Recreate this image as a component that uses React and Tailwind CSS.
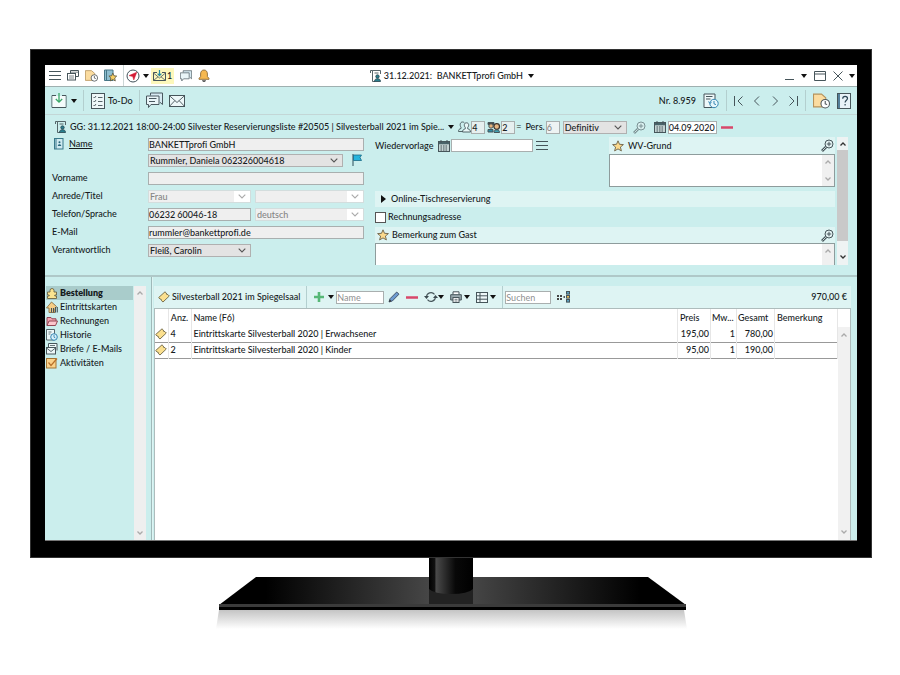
import { useState } from "react";

function Svg({ w, h, children, className = "" }) {
  return (
    <svg
      width={w}
      height={h}
      viewBox={`0 0 ${w} ${h}`}
      fill="none"
      stroke="#46555a"
      className={`shrink-0 ${className}`}
      aria-hidden="true"
    >
      {children}
    </svg>
  );
}

function IconButton({ label, children, className = "" }) {
  return (
    <button type="button" aria-label={label} className={`flex shrink-0 items-center ${className}`}>
      {children}
    </button>
  );
}

const Caret = () => (
  <Svg w={6} h={4}>
    <path d="M0 0h6L3 4z" fill="#111" stroke="none" />
  </Svg>
);

const Chevron = ({ color = "#555" }) => (
  <Svg w={8} h={5}>
    <path d="M.7.7L4 4 7.3.7" stroke={color} strokeWidth="1.1" />
  </Svg>
);

const ScrollArrow = ({ up, color = "#aaa" }) => (
  <Svg w={6} h={4} className={up ? "" : "rotate-180"}>
    <path d="M.5 3.500L3 1l2.500 2.500" stroke={color} strokeWidth="1.3" />
  </Svg>
);

const Separator = () => <span className="w-px self-stretch bg-[#b3cfcf]" />;

const Menu = () => (
  <Svg w={12} h={11}>
    <path d="M0 1.500h12M0 5.500h12M0 9.500h12" />
  </Svg>
);

const Windows = () => (
  <Svg w={12} h={11}>
    <path d="M3.500 3V.5h8v6H9" />
    <rect x=".5" y="3.500" width="8" height="6.500" />
    <path d="M2 6h5M2 8h5M4 2.200h7" strokeWidth=".7" />
  </Svg>
);

const NoteClock = ({ size = 13 }) => (
  <svg width={size} height={size} viewBox="0 0 16 15" fill="none" className="shrink-0" aria-hidden="true">
    <path d="M.5 1.500h7.500l4 3.500v8.500H.5z" fill="#fbdca0" stroke="#b6925a" />
    <circle cx="11.500" cy="10.500" r="4" fill="#fff" stroke="#4c5458" />
    <path d="M11.500 8v2.700l1.800.6" stroke="#4c5458" />
  </svg>
);

const BookStar = () => (
  <Svg w={13} h={13}>
    <path d="M.5 1h8.500v10.500H.5z" fill="#8fbfd0" stroke="#477787" />
    <path d="M2.500 1v10.500" stroke="#477787" />
    <path d="M8.800 4.200l1.200 2.600 2.700.3-2 1.900.6 2.900-2.500-1.400-2.500 1.400.6-2.900-2-1.900 2.700-.3z" fill="#f7ce63" stroke="#54513c" strokeWidth=".8" />
  </Svg>
);

const Compass = () => (
  <Svg w={14} h={14}>
    <circle cx="7" cy="7" r="6" stroke="#41525a" fill="#fff" />
    <path d="M10.800 3.200L7.800 11 6.700 7.600 3 6.600z" fill="#d51c36" stroke="#d51c36" strokeWidth=".5" />
  </Svg>
);

const MailIn = () => (
  <Svg w={13} h={11}>
    <path d="M4 2.500H.5v8h12v-8H9" />
    <path d="M.5 3l6 5 6-5M.5 10.500L5 6.800M12.500 10.500L8 6.800" strokeWidth=".8" />
    <path d="M6.500 0v5.500M4.600 3.700l1.900 1.900 1.900-1.900" stroke="#248ba4" strokeWidth="1.200" />
  </Svg>
);

const Chat = ({ size = 12, lines }) => (
  <svg width={size} height={size} viewBox="0 0 17 16" fill="none" stroke="#4a5960" className="shrink-0" aria-hidden="true">
    <path d="M4.500 3V.5h12V12l-2.500-2.200" fill="#d7eaf2" />
    <path d="M.5 3.500H13v8.500H5l-2.500 3V12h-2z" fill="#e9f5f8" />
    {lines && <path d="M3 6h7.500M3 9h6" />}
  </svg>
);

const Bell = () => (
  <Svg w={12} h={13}>
    <path d="M6 1C3.700 1 2.600 2.800 2.600 5v2.500L1 9.500v.8h10v-.8L9.400 7.500V5C9.400 2.800 8.300 1 6 1z" fill="#f6b84f" stroke="#8a6936" strokeWidth=".9" />
    <path d="M4.500 11.200a1.500 1.500 0 003 0" fill="#555" stroke="#555" strokeWidth=".8" />
  </Svg>
);

const GuestFile = () => (
  <Svg w={11} h={12}>
    <path d="M5 11.500H2.500V.5h8v3.500M.5 3V.5h2M4.500 3h4" strokeWidth=".9" />
    <circle cx="7.500" cy="6.500" r="1.700" fill="#2a7f8f" stroke="#24424b" strokeWidth=".8" />
    <path d="M4.500 11.500c0-2 1.200-2.800 3-2.800s3 .8 3 2.800z" fill="#2a7f8f" stroke="#24424b" strokeWidth=".8" />
  </Svg>
);

const SaveIn = () => (
  <Svg w={16} h={15}>
    <path d="M5 2.500H1v12h14v-12h-4" fill="none" />
    <path d="M1.500 3h13v11h-13z" fill="#f4fbfb" stroke="none" />
    <path d="M8 0v9M4.800 6l3.200 3.200L11.200 6" stroke="#3aa868" strokeWidth="1.300" />
  </Svg>
);

const Checklist = () => (
  <Svg w={14} h={16}>
    <rect x=".5" y=".5" width="13" height="15" fill="#eef8f9" />
    <path d="M2.500 4l1 1 1.500-2M2.500 8l1 1L5 7M2.500 12l1 1L5 11M7 4.500h4.500M7 8.500h4.500M7 12.500h4.500" strokeWidth=".9" />
  </Svg>
);

const Mail = () => (
  <Svg w={16} h={12}>
    <rect x=".5" y=".5" width="15" height="11" fill="#eef8f9" />
    <path d="M.5.7L8 7.500 15.500.7M.5 11.300l5.300-5.600M15.500 11.300l-5.300-5.600" strokeWidth=".9" />
  </Svg>
);

const History = () => (
  <Svg w={16} h={16}>
    <path d="M1 14.500V1h11v13.500z" fill="#eef8f9" />
    <path d="M3 3.500h6.500M3 6h4.500" />
    <circle cx="11" cy="10.500" r="4.200" fill="#e5f6fb" stroke="#3787b3" />
    <path d="M11 8v2.800l2 .8M5.500 8.500l1.400 2 1.800-1.500" stroke="#3787b3" />
  </Svg>
);

const Help = () => (
  <Svg w={14} h={16}>
    <rect x=".5" y=".5" width="13" height="15" fill="#e8f3f8" />
    <path d="M2 1v14" stroke="#54809a" strokeWidth="2" />
    <path d="M5.700 5.800c0-3.300 4.800-3 4.800-.3 0 1.800-2.400 1.700-2.400 4M8.100 11v1.500" stroke="#2d4655" strokeWidth="1.200" />
  </Svg>
);

const People = () => (
  <Svg w={13} h={12}>
    <path d="M6.500 10.500h-6c0-2 .8-2.500 2.500-3V6.200C1.500 4.500 2 1 4.500 1c1 0 1.700.4 2 1" strokeWidth=".9" />
    <path d="M4.500 11c0-2 1-2.600 2.800-3.200V6.500C5.700 4.700 6 1.800 8.500 1.800s2.800 2.900 1.200 4.700v1.300c1.800.6 2.800 1.200 2.800 3.200z" fill="#e8f7f7" strokeWidth=".9" />
  </Svg>
);

const Kids = () => (
  <Svg w={14} h={12}>
    <path d="M1 1.500h6v2H1z" fill="#444" />
    <circle cx="4" cy="5" r="2.200" fill="#e3b27c" />
    <path d="M1 11V8.500h5V11z" fill="#2f8ba2" />
    <circle cx="9.700" cy="5.500" r="2.800" fill="#e5b784" stroke="#3c3029" strokeWidth="1.200" />
    <path d="M7 11.500c0-2 1-2.700 2.700-2.700s2.800.7 2.800 2.700z" fill="#3f9fb0" />
  </Svg>
);

const Calendar = () => (
  <Svg w={12} h={12}>
    <rect x=".5" y="1.500" width="11" height="10" fill="#c3d2d2" />
    <path d="M1 3h10" strokeWidth="2.500" stroke="#49646a" />
    <path d="M3 0v3M9 0v3" />
    <path d="M2.500 6h7M2.500 8h7M2.500 10h7" strokeDasharray="1.500 1" strokeWidth="1.200" />
  </Svg>
);

const Magnifier = () => (
  <Svg w={13} h={13}>
    <circle cx="8" cy="5" r="4" fill="#e3f2f2" />
    <path d="M8 2.800v4.400M5.800 5h4.400" />
    <path d="M5 8l-4 4" strokeWidth="2.600" />
    <path d="M4.800 8.200L1.500 11.500" stroke="#dce9e9" strokeWidth=".9" />
  </Svg>
);

const Minus = () => (
  <Svg w={12} h={3}>
    <path d="M0 1.500h12" stroke="#d8476a" strokeWidth="2.500" />
  </Svg>
);

const Star = () => (
  <Svg w={12} h={12}>
    <path d="M6 .8l1.500 3.500 3.900.3-3 2.500 1 3.800L6 8.900l-3.400 2 1-3.800-3-2.500 3.900-.3z" fill="#fbd98c" stroke="#6b6148" strokeWidth=".9" />
  </Svg>
);

const AddressBook = () => (
  <Svg w={10} h={12}>
    <rect x=".5" y=".5" width="8.500" height="10.500" fill="#cfeaf0" stroke="#39798a" />
    <path d="M2 .5V11" stroke="#39798a" />
    <circle cx="5.500" cy="4.300" r="1" fill="#28677a" stroke="none" />
    <path d="M3.800 8c0-2.500 3.400-2.500 3.400 0z" fill="#28677a" stroke="none" />
  </Svg>
);

const Flag = () => (
  <Svg w={10} h={12}>
    <path d="M1 0v12" stroke="#2b4c58" />
    <path d="M1.500 1H9.500L8 3.500 9.500 6.500h-8z" fill="#25b5dd" stroke="#1a6a86" strokeWidth=".8" />
  </Svg>
);

const Ticket = () => (
  <Svg w={12} h={12}>
    <path d="M.7 6.500L7 .8 8.300 2Q8 3.800 9.900 3.600L11.300 5 5 11 3.600 9.800Q3.800 8 2 8z" fill="#fbe08f" stroke="#6c6443" strokeWidth=".9" />
  </Svg>
);

const Order = () => (
  <Svg w={12} h={12}>
    <path d="M4 3.500a2 2 0 114 0V5h2.500v3H8.800v1h1.700v2.500h-9V9h1.700V8H1.500V5H4z" fill="#fbe38f" stroke="#6c6443" strokeWidth=".9" />
  </Svg>
);

const Cards = () => (
  <Svg w={12} h={12}>
    <path d="M.5 7L5.500 1l5 4.500L9 8v3.500H3V7z" fill="#f6ce86" stroke="#8a7144" strokeWidth=".9" />
    <path d="M5.500 7v4.500M7.500 7v4.500M9.500 6v5.500M11.300 6v5.500" strokeWidth="1.100" />
  </Svg>
);

const Folder = () => (
  <Svg w={12} h={12}>
    <path d="M1 10.500v-8h4l1 1.300h4V6" fill="#f3a3ae" stroke="#924654" />
    <path d="M1 10.500L3 6h8.500l-2 4.500z" fill="#fcc5cc" stroke="#924654" />
  </Svg>
);

const HistorySmall = () => (
  <Svg w={12} h={12}>
    <path d="M.5 11V.5h8V11z" fill="#eef8f9" strokeWidth=".9" />
    <path d="M2.500 3h3M2.500 5h2" strokeWidth=".8" />
    <circle cx="8" cy="8" r="3.300" fill="#d8f0fa" stroke="#3787b3" />
    <path d="M8 6v2.200l1.300.7" stroke="#3787b3" strokeWidth=".9" />
  </Svg>
);

const Letters = () => (
  <Svg w={12} h={12}>
    <path d="M2.500 4.500v-4h8.500v7" fill="#eef8f9" />
    <path d="M4 2.500h5" strokeWidth=".8" />
    <rect x=".5" y="4.500" width="9" height="6.500" fill="#eef8f9" />
    <path d="M.5 5L5 8.500 9.500 5" strokeWidth=".9" />
  </Svg>
);

const Task = () => (
  <Svg w={12} h={12}>
    <rect x=".5" y="1.500" width="9.500" height="9.500" fill="#fbd28a" stroke="#a37434" />
    <path d="M2.500 5.500L5 8.500l6-7" stroke="#b8702a" strokeWidth="1.200" />
  </Svg>
);

const Plus = () => (
  <Svg w={12} h={12}>
    <path d="M6 1v10M1 6h10" stroke="#57b877" strokeWidth="2.600" />
  </Svg>
);

const Pencil = () => (
  <Svg w={12} h={12}>
    <path d="M1 11l1-3.300L8.700 1l2.300 2.200L4.300 10z" fill="#6d9bd0" stroke="#3b4b60" strokeWidth=".9" />
    <path d="M1 11l.8-2.500 1.700 1.600z" fill="#333" stroke="none" />
  </Svg>
);

const Refresh = () => (
  <Svg w={14} h={12}>
    <path d="M2.500 6a4.500 4.500 0 018-2.700M11.500 6a4.500 4.500 0 01-8 2.700" strokeWidth="1.100" />
    <path d="M0 5h5L2.500 8zM9 7h5l-2.500-3z" fill="#3d4b50" stroke="none" />
  </Svg>
);

const Printer = () => (
  <Svg w={12} h={12}>
    <path d="M3 3.500V.8h6v2.700" fill="#fff" />
    <path d="M3 9H.7V3.700h10.600V9H9" fill="#9aaaaf" />
    <rect x="3" y="6.500" width="6" height="5" fill="#fff" />
    <path d="M4.500 8.300h3M4.500 10h3" strokeWidth=".8" />
  </Svg>
);

const Grid = () => (
  <Svg w={12} h={11}>
    <rect x=".5" y=".5" width="11" height="10" fill="#eef8f9" />
    <path d="M4 .5v10M.5 3.800h11M.5 7.200h11" />
  </Svg>
);

const Structure = () => (
  <Svg w={14} h={12}>
    <path d="M0 4h2v2H0zM3 4h2v2H3zM0 7h2v2H0zM3 7h2v2H3z" fill="#444" stroke="none" />
    <path d="M6.500 6h1.500" stroke="#222" strokeWidth="1.500" />
    <rect x="9.500" y=".5" width="3" height="2.600" fill="#5aa0c0" />
    <rect x="9.500" y="4.500" width="3" height="2.600" fill="#e9ba53" />
    <rect x="9.500" y="8.500" width="3" height="2.600" fill="#5aa0c0" />
  </Svg>
);

function Dropdown({ label, value, disabled, className = "" }) {
  return (
    <div className={`relative h-[13px] ${className}`}>
      <select
        aria-label={label}
        disabled={disabled}
        className={
          disabled
            ? "block h-full w-full appearance-none border border-[#d3dddd] bg-[#efefef] pl-px leading-[11px] text-[#858585] opacity-100"
            : "block h-full w-full appearance-none border border-[#b0b0b0] bg-[#e3e3e3] pl-px leading-[11px]"
        }
      >
        <option>{value}</option>
      </select>
      <span
        className={`pointer-events-none absolute inset-y-px right-px flex w-4 items-center justify-center ${disabled ? "bg-white" : ""}`}
      >
        <Chevron color={disabled ? "#aaa" : "#555"} />
      </span>
    </div>
  );
}

function TextField({ className = "", ...props }) {
  return (
    <input
      type="text"
      className={`h-[13px] min-w-0 border border-[#a9afaf] leading-[11px] ${className}`}
      {...props}
    />
  );
}

function TitleBar() {
  return (
    <header className="flex h-[22px] shrink-0 items-center border-b border-[#9fb0b0] bg-white pl-1 pr-[2px]">
      <div className="flex h-full flex-1 items-center gap-[6px]">
        <IconButton label="Menü"><Menu /></IconButton>
        <IconButton label="Fenster"><Windows /></IconButton>
        <IconButton label="Notiz"><NoteClock /></IconButton>
        <IconButton label="Favoriten"><BookStar /></IconButton>
        <div className="flex h-full items-center gap-[2px]">
          <span className="h-full w-px bg-[#ccd6d6]" />
          <IconButton label="Kompass" className="gap-[3px]"><Compass /><Caret /></IconButton>
          <IconButton label="Posteingang" className="h-4 gap-px bg-[#fdf8bb] px-[2px]"><MailIn />1</IconButton>
        </div>
        <IconButton label="Chat"><Chat /></IconButton>
        <IconButton label="Benachrichtigungen"><Bell /></IconButton>
      </div>
      <button type="button" className="flex items-center gap-[3px] whitespace-pre">
        <GuestFile />31.12.2021:  BANKETTprofi GmbH <Caret />
      </button>
      <div className="flex flex-1 items-center justify-end gap-[7px]">
        <IconButton label="Minimieren" className="gap-[7px]">
          <Svg w={9} h={11}><path d="M0 9.500h9" /></Svg>
          <Caret />
        </IconButton>
        <IconButton label="Maximieren">
          <Svg w={12} h={10}><path d="M.5.5h11v9H.5zM.5 3h11" /></Svg>
        </IconButton>
        <IconButton label="Schließen" className="gap-[6px]">
          <Svg w={10} h={10}><path d="M.5.5l9 9M9.500.5l-9 9" /></Svg>
          <Caret />
        </IconButton>
      </div>
    </header>
  );
}

function Toolbar() {
  return (
    <div className="flex h-7 shrink-0 items-center justify-between border-b border-[#c3d6d6] px-[6px] py-[3px]">
      <div className="flex h-full items-center gap-[6px]">
        <IconButton label="Speichern" className="gap-1"><SaveIn /><Caret /></IconButton>
        <Separator />
        <button type="button" className="flex items-center gap-[3px] pl-px"><Checklist />To-Do</button>
        <Separator />
        <IconButton label="Nachrichten"><Chat size={17} lines /></IconButton>
        <IconButton label="E-Mail"><Mail /></IconButton>
      </div>
      <div className="flex h-full items-center gap-[7px]">
        <span>Nr. 8.959</span>
        <IconButton label="Verlauf"><History /></IconButton>
        <Separator />
        <div className="flex items-center gap-[10px]">
          <IconButton label="Erster"><Svg w={9} h={10}><path d="M.5 0v10M8.500.5L4 5l4.500 4.500" /></Svg></IconButton>
          <IconButton label="Zurück"><Svg w={7} h={10}><path d="M6 .5L1.500 5 6 9.500" /></Svg></IconButton>
          <IconButton label="Weiter"><Svg w={9} h={10}><path d="M3 .5L7.500 5 3 9.500" /></Svg></IconButton>
          <IconButton label="Letzter"><Svg w={9} h={10}><path d="M8.500 0v10M.5.5L5 5 .5 9.500" /></Svg></IconButton>
        </div>
        <Separator />
        <IconButton label="Termin"><NoteClock size={17} /></IconButton>
        <IconButton label="Hilfe"><Help /></IconButton>
      </div>
    </div>
  );
}

function EventBar() {
  return (
    <div className="flex h-[22px] shrink-0 items-center pl-[10px] pt-[2px]">
      <button type="button" className="flex items-center gap-1 whitespace-nowrap">
        <GuestFile />
        GG: 31.12.2021 18:00-24:00 Silvester Reservierungsliste #20505 | Silvesterball 2021 im Spie...
        <Caret />
      </button>
      <div className="ml-1 flex items-center">
        <People />
        <TextField aria-label="Erwachsene" defaultValue="4" className="w-[14px] bg-[#e6efef]" />
        <span className="w-[2px]" />
        <Kids />
        <TextField aria-label="Kinder" defaultValue="2" className="w-[14px] bg-[#e6efef]" />
      </div>
      <span className="ml-px">=</span>
      <label htmlFor="persons" className="ml-1">Pers.</label>
      <TextField id="persons" defaultValue="6" className="ml-px w-[14px] bg-[#eef3f3] text-[#888]" />
      <Dropdown label="Status" value="Definitiv" className="ml-[3px] w-16" />
      <IconButton label="Suchen" className="ml-[6px] opacity-60"><Magnifier /></IconButton>
      <IconButton label="Kalender" className="ml-2"><Calendar /></IconButton>
      <TextField aria-label="Datum" defaultValue="04.09.2020" className="ml-[2px] w-[49px] bg-white" />
      <IconButton label="Datum entfernen" className="ml-1"><Minus /></IconButton>
    </div>
  );
}

function GuestForm() {
  return (
    <form className="grid w-[312px] shrink-0 auto-rows-[18px] grid-cols-[96px_216px] items-center">
      <div className="-mt-1 flex items-center gap-[5px] pl-[2px]">
        <AddressBook />
        <label htmlFor="name" className="underline">Name</label>
      </div>
      <TextField id="name" defaultValue="BANKETTprofi GmbH" className="-mt-1 bg-[#efefef]" />
      <span />
      <div className="-mt-2 flex items-center justify-between">
        <Dropdown label="Kontakt" value="Rummler, Daniela 062326004618" className="w-[195px]" />
        <IconButton label="Markieren" className="pr-[2px]"><Flag /></IconButton>
      </div>
      <label htmlFor="vorname" className="-mt-2">Vorname</label>
      <TextField id="vorname" className="-mt-2 bg-[#efefef]" />
      <span className="-mt-2">Anrede/Titel</span>
      <div className="-mt-2 flex gap-1">
        <Dropdown label="Anrede" value="Frau" disabled className="w-[103px]" />
        <Dropdown label="Titel" value="" disabled className="flex-1" />
      </div>
      <label htmlFor="telefon" className="-mt-2">Telefon/Sprache</label>
      <div className="-mt-2 flex gap-1">
        <TextField id="telefon" defaultValue="06232 60046-18" className="w-[103px] bg-[#efefef]" />
        <Dropdown label="Sprache" value="deutsch" disabled className="flex-1" />
      </div>
      <label htmlFor="email" className="-mt-2">E-Mail</label>
      <TextField id="email" defaultValue="rummler@bankettprofi.de" className="-mt-2 bg-[#efefef]" />
      <span className="-mt-2">Verantwortlich</span>
      <Dropdown label="Verantwortlich" value="Fleiß, Carolin" className="-mt-2 w-[103px]" />
    </form>
  );
}

function NoteArea({ label, className = "", last }) {
  return (
    <div className={`flex border border-[#8e9c9c] bg-white ${className}`}>
      <textarea aria-label={label} className="block min-w-0 flex-1 resize-none" />
      <div className="flex w-3 flex-col items-center justify-between bg-[#f0f0f0] py-[5px]">
        <ScrollArrow up />
        {!last && <ScrollArrow />}
      </div>
    </div>
  );
}

function Details() {
  return (
    <div className="flex min-w-0 flex-1">
      <div className="min-w-0 flex-1">
        <div className="flex h-[54px] items-start justify-between">
          <div className="flex items-center pt-[2px]">
            <label htmlFor="wiedervorlage" className="w-[63px]">Wiedervorlage</label>
            <Calendar />
            <TextField id="wiedervorlage" className="ml-px w-[82px] bg-white" />
            <IconButton label="Liste" className="ml-[3px]"><Menu /></IconButton>
          </div>
          <div className="w-[226px]">
            <div className="flex h-[17px] items-center gap-1 bg-[#def4f3] pl-[3px] pr-px">
              <Star />
              <span className="flex-1">WV-Grund</span>
              <IconButton label="WV-Grund vergrößern"><Magnifier /></IconButton>
            </div>
            <NoteArea label="WV-Grund" className="h-[33px]" />
          </div>
        </div>
        <button type="button" className="flex h-4 w-full items-center gap-[5px] bg-[#def4f3] pl-[6px]">
          <Svg w={5} h={8}><path d="M0 0l5 4-5 4z" fill="#111" stroke="none" /></Svg>
          Online-Tischreservierung
        </button>
        <label className="flex h-5 items-center gap-[2px]">
          <input type="checkbox" className="h-[11px] w-[11px] appearance-none border border-[#555] bg-white checked:bg-[#3d4b50]" />
          Rechnungsadresse
        </label>
        <div className="flex h-4 items-center gap-[3px] bg-[#def4f3] pl-[2px] pr-px">
          <Star />
          <span className="flex-1">Bemerkung zum Gast</span>
          <IconButton label="Bemerkung vergrößern"><Magnifier /></IconButton>
        </div>
        <NoteArea label="Bemerkung zum Gast" className="h-[22px] border-b-0" last />
      </div>
      <div className="ml-[2px] mr-[9px] flex w-[11px] flex-col items-center bg-[#eef3f3]">
        <span className="flex h-[13px] items-center"><ScrollArrow up color="#333" /></span>
        <span className="w-full flex-1 bg-[#c9c9c9]" />
        <span className="flex h-6 items-center pt-2"><ScrollArrow color="#333" /></span>
      </div>
    </div>
  );
}

const sections = [
  { name: "Bestellung", Icon: Order },
  { name: "Eintrittskarten", Icon: Cards },
  { name: "Rechnungen", Icon: Folder },
  { name: "Historie", Icon: HistorySmall },
  { name: "Briefe / E-Mails", Icon: Letters },
  { name: "Aktivitäten", Icon: Task },
];

function Sidebar() {
  const [active, setActive] = useState("Bestellung");

  return (
    <div className="flex w-[102px] shrink-0">
      <nav className="w-[88px] pl-px">
        {sections.map(({ name, Icon }) => (
          <button
            key={name}
            type="button"
            onClick={() => setActive(name)}
            className={`flex h-[14px] w-full items-center gap-[2px] whitespace-nowrap ${active === name ? "bg-[#a9cccb] font-extrabold" : ""}`}
          >
            <Icon />
            {name}
          </button>
        ))}
      </nav>
      <div className="ml-px flex w-3 flex-col items-center justify-between bg-[#efefef] py-[5px]">
        <ScrollArrow up />
        <ScrollArrow />
      </div>
    </div>
  );
}

const positions = [
  { count: "4", name: "Eintrittskarte Silvesterball 2020 | Erwachsener", price: "195,00", vat: "1", total: "780,00" },
  { count: "2", name: "Eintrittskarte Silvesterball 2020 | Kinder", price: "95,00", vat: "1", total: "190,00" },
];

function OrderTable() {
  return (
    <div className="flex flex-1 border border-b-0 border-[#aebcbc] bg-white">
      <div className="min-w-0 flex-1">
        <table className="w-full table-fixed border-collapse text-left">
          <colgroup>
            <col className="w-[13px]" />
            <col className="w-[23px]" />
            <col />
            <col className="w-[33px]" />
            <col className="w-[26px]" />
            <col className="w-[38px]" />
            <col className="w-[63px]" />
          </colgroup>
          <thead>
            <tr className="h-[17px] whitespace-nowrap *:border-r *:border-[#e6e6e6] *:p-0 *:font-medium">
              <th aria-label="Typ" />
              <th className="text-center">Anz.</th>
              <th><span className="pl-[2px]">Name (F6)</span></th>
              <th><span className="pl-[2px]">Preis</span></th>
              <th><span className="pl-px">Mw...</span></th>
              <th><span className="pl-px">Gesamt</span></th>
              <th><span className="pl-[2px]">Bemerkung</span></th>
            </tr>
          </thead>
          <tbody>
            {positions.map((p) => (
              <tr key={p.name} className="h-4 border-b border-[#999] *:border-r *:border-r-[#e6e6e6] *:p-0">
                <td><Ticket /></td>
                <td><span className="pl-[2px]">{p.count}</span></td>
                <td><span className="pl-[2px]">{p.name}</span></td>
                <td className="text-right"><span className="pr-px">{p.price}</span></td>
                <td className="text-right"><span className="pr-px">{p.vat}</span></td>
                <td className="text-right"><span className="pr-px">{p.total}</span></td>
                <td />
              </tr>
            ))}
          </tbody>
        </table>
      </div>
      <div className="mt-[18px] flex w-3 flex-col items-center justify-between bg-[#f1f1f1] py-[6px]">
        <ScrollArrow up />
        <ScrollArrow />
      </div>
    </div>
  );
}

function OrderPanel() {
  return (
    <div className="mr-[6px] flex min-w-0 flex-1 flex-col">
      <div className="flex h-[22px] shrink-0 items-center gap-[6px] bg-[#def4f3] px-1">
        <div className="flex items-center gap-[2px] whitespace-nowrap"><Ticket />Silvesterball 2021 im Spiegelsaal</div>
        <Separator />
        <div className="flex items-center gap-[2px]">
          <IconButton label="Hinzufügen" className="gap-[3px]"><Plus /><Caret /></IconButton>
          <TextField aria-label="Name" placeholder="Name" className="w-12 bg-white" />
          <IconButton label="Bearbeiten" className="ml-[2px]"><Pencil /></IconButton>
        </div>
        <IconButton label="Entfernen"><Minus /></IconButton>
        <IconButton label="Aktualisieren"><Refresh /><Caret /></IconButton>
        <IconButton label="Drucken" className="gap-[2px]"><Printer /><Caret /></IconButton>
        <IconButton label="Spalten" className="gap-[2px]"><Grid /><Caret /></IconButton>
        <div className="flex gap-[2px] self-stretch">
          <Separator />
          <TextField aria-label="Suchen" placeholder="Suchen" className="w-[46px] self-center bg-white" />
        </div>
        <IconButton label="Struktur"><Structure /></IconButton>
        <span className="ml-auto">970,00 €</span>
      </div>
      <OrderTable />
    </div>
  );
}

function Stand() {
  return (
    <svg width="476" height="76" viewBox="0 0 476 76" className="mx-auto shrink-0" aria-hidden="true">
      <defs>
        <linearGradient id="plate">
          <stop offset="0.100" stopColor="#000" />
          <stop offset="0.450" stopColor="#464646" />
          <stop offset="0.550" stopColor="#444" />
          <stop offset="0.900" stopColor="#000" />
        </linearGradient>
        <linearGradient id="neck">
          <stop offset="0" stopColor="#000" />
          <stop offset="0.130" stopColor="#111" />
          <stop offset="0.160" stopColor="#4a4a4a" />
          <stop offset="0.600" stopColor="#080808" />
          <stop offset="1" stopColor="#000" />
        </linearGradient>
        <linearGradient id="shade" x2="0" y2="1">
          <stop offset="0" stopColor="#c4c4c4" />
          <stop offset="1" stopColor="#fff" />
        </linearGradient>
      </defs>
      <path d="M6 52h465l3 19H3z" fill="url(#shade)" />
      <path d="M43 19h392l38 28H6z" fill="url(#plate)" />
      <path d="M216 30h44v17h-44z" fill="#222" />
      <path d="M6 46h467v3H6z" fill="#3b3b3b" />
      <path d="M6 49h467v3H6z" fill="#000" />
      <path d="M216 0h44v31q-5 5-22 5t-22-5z" fill="url(#neck)" />
    </svg>
  );
}

export default function App() {
  return (
    <div className="flex min-h-screen flex-col bg-white pb-[41px] pl-[30px] pr-[28px] pt-[49px] font-[Lato,'Open_Sans',sans-serif] text-[9px] font-medium leading-3 text-[#161b1d] [font-variant-ligatures:none]">
      <div className="flex flex-1 flex-col border border-[#333] bg-black px-[14px] pb-4 pt-[15px]">
        <main className="flex flex-1 flex-col border-b border-[#777] bg-[#cbeeed]">
          <TitleBar />
          <Toolbar />
          <EventBar />
          <div className="flex gap-[11px] pb-[10px] pl-[7px]">
            <GuestForm />
            <Details />
          </div>
          <div className="flex flex-1 border-t-2 border-[#afc8c8]">
            <div className="flex flex-1 pt-[9px]">
              <Sidebar />
              <div className="-mt-[9px] ml-1 mr-px w-[2px] border-l border-[#9fb9b9] bg-[#def4f3]" />
              <OrderPanel />
            </div>
          </div>
        </main>
      </div>
      <Stand />
    </div>
  );
}
